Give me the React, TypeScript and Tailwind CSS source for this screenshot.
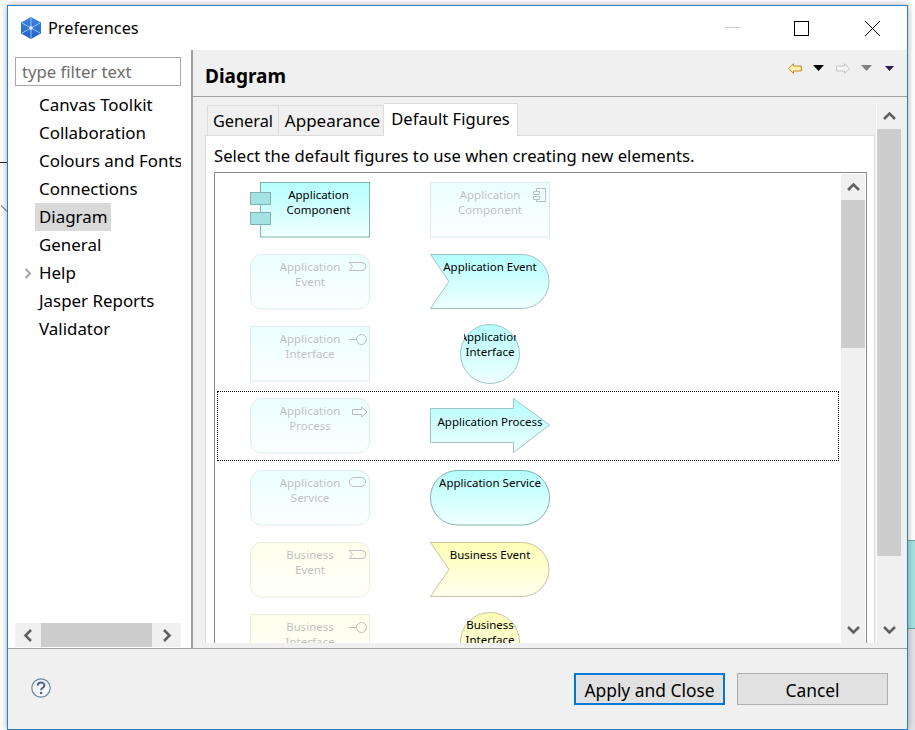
type Kind = 'component' | 'event' | 'interface' | 'process' | 'service';
type Tone = 'app' | 'biz';

const TREE = ['Canvas Toolkit', 'Collaboration', 'Colours and Fonts', 'Connections', 'Diagram', 'General', 'Help', 'Jasper Reports', 'Validator'];

const ROWS: { tone: Tone; kind: Kind; lines: string[] }[] = [
  { tone: 'app', kind: 'component', lines: ['Application', 'Component'] },
  { tone: 'app', kind: 'event', lines: ['Application', 'Event'] },
  { tone: 'app', kind: 'interface', lines: ['Application', 'Interface'] },
  { tone: 'app', kind: 'process', lines: ['Application', 'Process'] },
  { tone: 'app', kind: 'service', lines: ['Application', 'Service'] },
  { tone: 'biz', kind: 'event', lines: ['Business', 'Event'] },
  { tone: 'biz', kind: 'interface', lines: ['Business', 'Interface'] },
];

const PALETTE = {
  app: { top: '#b5ffff', bottom: '#f0ffff', stroke: '#7fb2b2', soft: '#9cc6c6', part: '#a2e2e2' },
  biz: { top: '#ffffb5', bottom: '#fffff0', stroke: '#b2b27f', soft: '#c6c69c', part: '#e2e2a2' },
};

function Chevron({ dir, className }: { dir: 'up' | 'down' | 'left' | 'right'; className?: string }) {
  const d = { up: 'M1 8 L6.5 2.5 L12 8', down: 'M1 2 L6.5 7.5 L12 2', left: 'M8 1 L2.5 6.5 L8 12', right: 'M2 1 L7.5 6.5 L2 12' }[dir];
  return (
    <svg viewBox={dir === 'up' || dir === 'down' ? '0 0 13 10' : '0 0 10 13'} className={className} fill="none" stroke="currentColor" strokeWidth="2.6">
      <path d={d} />
    </svg>
  );
}

function Body({ kind, tone, notation }: { kind: Kind; tone: Tone; notation: boolean }) {
  const c = PALETTE[tone];
  const grad = `url(#${tone}-fill)`;
  const box = { fill: grad, stroke: c.stroke };
  if (!notation) {
    // the plain box, with the type drawn small in the corner
    return kind === 'component' || kind === 'interface'
      ? <rect x="0.5" y="0.5" width="119" height="54.5" {...box} />
      : <rect x="0.5" y="0.5" width="119" height="54.5" rx="11" {...box} />;
  }
  switch (kind) {
    case 'component':
      return (
        <>
          <rect x="10.5" y="0.5" width="109" height="54.5" {...box} />
          <rect x="0.5" y="10.5" width="20" height="12" fill={c.part} stroke={c.stroke} />
          <rect x="0.5" y="30.5" width="20" height="12" fill={c.part} stroke={c.stroke} />
        </>
      );
    case 'event':
      return <path d="M0.5 0.5 H92 A27 27 0 0 1 92 54.5 H0.5 L19 27.5 Z" fill={grad} stroke={c.soft} />;
    case 'interface':
      return <circle cx="60" cy="28" r="29.5" fill={grad} stroke={c.soft} />;
    case 'process':
      return <path d="M0.5 10.5 H83.5 V0.5 L119.5 27 L83.5 54.5 V44.5 H0.5 Z" fill={grad} stroke={c.soft} />;
    case 'service':
      return <rect x="0.5" y="0.5" width="119" height="54.5" rx="27" {...box} />;
  }
}

function TypeIcon({ kind }: { kind: Kind }) {
  const s = { fill: 'none', stroke: '#000', strokeWidth: 1 };
  switch (kind) {
    case 'component':
      return (
        <>
          <path d="M106.5 9.5 V6.5 H115.5 V19.5 H106.5 V17.5" {...s} />
          <path d="M103.5 9.5 H109.5 V12.5 H103.5 Z M103.5 14.5 H109.5 V17.5 H103.5 Z" {...s} />
        </>
      );
    case 'event':
      return <path d="M99.5 8.5 H112 A4 4 0 0 1 112 16.5 H99.5 L102.5 12.5 Z" {...s} />;
    case 'interface':
      return (
        <>
          <path d="M99 13.5 H106.5" {...s} />
          <circle cx="111.5" cy="13.5" r="5" {...s} />
        </>
      );
    case 'process':
      return <path d="M102.5 11.5 H111.5 V9 L117 14 L111.5 19 V16.5 H102.5 Z" {...s} />;
    case 'service':
      return <rect x="99.5" y="7.5" width="16" height="9" rx="4.5" {...s} />;
  }
}

function Figure({ kind, tone, lines, notation, ghost }: { kind: Kind; tone: Tone; lines: string[]; notation: boolean; ghost?: boolean }) {
  const c = PALETTE[tone];
  const round = notation && kind === 'interface';
  const wide = notation && (kind === 'event' || kind === 'service' || kind === 'process');
  const label = wide ? [lines.join(' ')] : lines;
  const offset = round ? 'pt-[3px]' : kind === 'process' && notation ? 'pt-[16px]' : 'pt-[5px]';
  return (
    <div className={`relative h-[56px] w-[120px] shrink-0 ${ghost ? 'opacity-25' : ''}`}>
      <svg width="120" height="60" viewBox="0 0 120 60" className="absolute left-0 top-0 overflow-visible">
        <defs>
          <linearGradient id={`${tone}-fill`} x1="0" y1="0" x2="0" y2="1">
            <stop offset="0" stopColor={c.top} />
            <stop offset="1" stopColor={c.bottom} />
          </linearGradient>
        </defs>
        <Body kind={kind} tone={tone} notation={notation} />
        {!notation && <TypeIcon kind={kind} />}
      </svg>
      <div className={`relative flex flex-col items-center text-[11.5px] leading-[15px] text-black ${offset} ${kind === 'component' && notation ? 'pl-[17px]' : ''}`}>
        {label.map((l) => (
          <div key={l} className={`flex justify-center whitespace-nowrap ${round ? 'w-[52px] overflow-hidden' : ''}`}>
            <span className="shrink-0">{l}</span>
          </div>
        ))}
      </div>
    </div>
  );
}

function Logo() {
  return (
    <svg viewBox="0 0 20 22" className="h-[22px] w-[20px]">
      <defs>
        <linearGradient id="logo" x1="0" y1="0" x2="0" y2="1">
          <stop offset="0" stopColor="#3f86e0" />
          <stop offset="1" stopColor="#1f62c8" />
        </linearGradient>
      </defs>
      <path d="M10 0 L20 5.5 V16.5 L10 22 L0 16.5 V5.5 Z" fill="url(#logo)" />
      <path d="M10 1 V21 M1 6 L19 16 M19 6 L1 16" stroke="#a9cdf5" strokeWidth="0.9" />
      <circle cx="10" cy="11" r="1.8" fill="#e6f1fd" />
    </svg>
  );
}

function NavArrow({ back, active }: { back?: boolean; active?: boolean }) {
  return (
    <svg viewBox="0 0 14 11" className={`h-[11px] w-[14px] ${back ? '' : '-scale-x-100'}`}>
      <path
        d="M0.7 5.5 L5.5 0.7 V3 H13.4 V8 H5.5 V10.3 Z"
        fill={active ? '#fff0b0' : '#f6f6f6'}
        stroke={active ? '#c4852a' : '#c2c2c2'}
      />
    </svg>
  );
}

function Tri({ color, small }: { color: string; small?: boolean }) {
  return (
    <svg viewBox="0 0 11 6" className={small ? 'h-[5px] w-[9px]' : 'h-[6px] w-[11px]'}>
      <path d="M0 0 H11 L5.5 6 Z" fill={color} />
    </svg>
  );
}

export default function App() {
  return (
    <div className="relative h-[730px] w-[915px] overflow-hidden bg-white pl-[7px] pt-[5px] font-['Noto_Sans','Open_Sans',sans-serif] text-black">
      {/* desktop behind the dialog */}
      <div className="absolute left-0 top-[162px] h-px w-[8px] bg-[#222]" />
      <div className="absolute left-0 top-[208px] h-px w-[8px] rotate-45 bg-[#777]" />
      <div className="absolute left-[908px] top-[540px] h-[89px] w-[7px] border-y border-[#6fa5a5] bg-[#a8e4e2]" />
      <div className="absolute left-[908px] top-[629px] h-[101px] w-[7px] bg-[#e4e4e8]" />

      <div className="relative flex h-[725px] w-[901px] flex-col border border-[#2a7fc9] bg-white shadow-[0_0_7px_rgba(0,0,0,0.35)]">
        {/* title bar */}
        <div className="flex h-[44px] shrink-0 items-center pl-[13px] pr-[27px]">
          <Logo />
          <span className="ml-[7px] text-[16.3px]">Preferences</span>
          <div className="ml-auto flex items-center">
            <div className="-mt-px h-px w-[15px] bg-[#c8c8c8]" />
            <div className="ml-[54px] h-[15px] w-[15px] border border-black" />
            <svg viewBox="0 0 15 15" className="ml-[56px] h-[15px] w-[15px]" stroke="#000" strokeWidth="1">
              <path d="M0 0 L15 15 M15 0 L0 15" />
            </svg>
          </div>
        </div>

        <div className="flex min-h-0 flex-1">
          {/* left: filter and tree */}
          <div className="flex w-[185px] shrink-0 flex-col border-r-2 border-[#a0a0a0] pl-[7px] pr-[10px] pt-[7px]">
            <input
              readOnly
              placeholder="type filter text"
              className="h-[29px] w-[166px] shrink-0 border border-[#a8a8a8] px-[6px] text-[16.7px] outline-none placeholder:text-[#6d6d6d]"
            />
            <div className="mt-[5px] w-[166px] flex-1 overflow-hidden">
              {TREE.map((t) => (
                <div key={t} className="relative flex h-[28px] items-center whitespace-nowrap pl-[20px] text-[16.9px]">
                  {t === 'Help' && (
                    <Chevron dir="right" className="absolute left-[9px] top-[9px] h-[11px] w-[8px] text-[#a6a6a6]" />
                  )}
                  <span className={`flex h-[28px] items-center px-[4px] ${t === 'Diagram' ? 'bg-[#d9d9d9]' : ''}`}>{t}</span>
                </div>
              ))}
            </div>
            <div className="flex h-[24px] w-[166px] shrink-0 items-center bg-[#f0f0f0]">
              <div className="flex w-[26px] justify-center">
                <Chevron dir="left" className="h-[13px] w-[10px] text-[#606060]" />
              </div>
              <div className="h-full w-[111px] bg-[#cdcdcd]" />
              <div className="flex w-[29px] justify-center">
                <Chevron dir="right" className="h-[13px] w-[10px] text-[#606060]" />
              </div>
            </div>
            <div className="h-px shrink-0" />
          </div>

          {/* right: page */}
          <div className="flex min-w-0 flex-1 flex-col bg-[#f0f0f0]">
            <div className="flex h-[47px] shrink-0 items-center border-b border-[#a0a0a0] pl-[12px] pr-[13px]">
              <span className="pt-[6px] text-[19px] font-bold">Diagram</span>
              <div className="-mt-[10px] ml-auto flex items-center">
                <NavArrow back active />
                <div className="ml-[11px]"><Tri color="#000" /></div>
                <div className="ml-[12px]"><NavArrow /></div>
                <div className="ml-[11px]"><Tri color="#808080" /></div>
                <div className="ml-[13px]"><Tri color="#2e1c52" small /></div>
              </div>
            </div>

            <div className="flex min-h-0 flex-1 pb-[5px] pl-[12px] pr-[6px] pt-[6px]">
              {/* tab folder */}
              <div className="flex w-[670px] shrink-0 flex-col">
                <div className="relative z-10 flex h-[33px] shrink-0 items-end pl-[2px]">
                  <div className="flex h-[31px] w-[71px] items-center justify-center border border-b-0 border-r-0 border-[#dcdcdc] text-[16.3px]">General</div>
                  <div className="flex h-[31px] w-[106px] items-center justify-center border border-b-0 border-[#dcdcdc] pl-[3px] text-[17px]">Appearance</div>
                  <div className="flex h-[33px] w-[134px] items-center justify-center border border-b-0 border-l-0 border-[#dcdcdc] bg-white pb-[2px] text-[16.6px]">Default Figures</div>
                </div>
                <div className="-mt-px flex min-h-0 flex-1 flex-col border-x border-t border-x-[#dcdcdc] border-t-[#dcdcdc] bg-white pl-[8px]">
                  <div className="flex h-[36px] shrink-0 items-center pt-[4px] text-[16.65px]">Select the default figures to use when creating new elements.</div>
                  <div className="flex min-h-0 w-[653px] flex-1 border-x border-t border-[#8a8a8a]">
                    <div className="min-w-0 flex-1 overflow-hidden">
                      {ROWS.map((r, i) => (
                        <div key={i} className="h-[72px] px-[2px] pt-[2px]">
                          <div className={`flex h-[70px] gap-[60px] border pl-[32px] pt-[6px] ${i === 3 ? 'border-dotted border-black' : 'border-transparent'}`}>
                            <Figure kind={r.kind} tone={r.tone} lines={r.lines} notation={i === 0} ghost={i !== 0} />
                            <Figure kind={r.kind} tone={r.tone} lines={r.lines} notation={i !== 0} ghost={i === 0} />
                          </div>
                        </div>
                      ))}
                    </div>
                    <div className="mt-px flex w-[24px] shrink-0 flex-col items-center bg-[#f0f0f0]">
                      <div className="flex h-[26px] items-center"><Chevron dir="up" className="h-[10px] w-[13px] text-[#606060]" /></div>
                      <div className="h-[148px] w-full bg-[#cdcdcd]" />
                      <div className="mt-auto flex h-[26px] items-center"><Chevron dir="down" className="h-[10px] w-[13px] text-[#606060]" /></div>
                    </div>
                    <div className="w-px shrink-0" />
                  </div>
                </div>
              </div>

              {/* page scrollbar */}
              <div className="ml-[1px] w-px shrink-0 bg-white" />
              <div className="flex w-[24px] shrink-0 flex-col items-center">
                <div className="flex h-[26px] items-center"><Chevron dir="up" className="h-[10px] w-[13px] text-[#606060]" /></div>
                <div className="h-[427px] w-full bg-[#cdcdcd]" />
                <div className="mt-auto flex h-[26px] items-center"><Chevron dir="down" className="h-[10px] w-[13px] text-[#606060]" /></div>
              </div>
            </div>
          </div>
        </div>

        {/* buttons */}
        <div className="flex h-[81px] shrink-0 items-start border-t border-[#a0a0a0] bg-[#f0f0f0] pl-[23px] pr-[19px] pt-[24px]">
          <svg viewBox="0 0 20 20" className="mt-[5px] h-[20px] w-[20px]">
            <circle cx="10" cy="10" r="9.2" fill="#f4f6fa" stroke="#6f86a8" strokeWidth="1.2" />
            <path d="M6.8 7.6 C6.8 3.6 13.4 3.6 13.4 7.4 C13.4 9.8 10.1 9.8 10.1 12.2" fill="none" stroke="#4a6390" strokeWidth="2" />
            <circle cx="10.1" cy="15" r="1.3" fill="#4a6390" />
          </svg>
          <button className="ml-auto h-[32px] w-[151px] border-2 border-[#0078d7] bg-[#e1e1e1] pt-[2px] text-[17.4px]">Apply and Close</button>
          <button className="ml-[12px] h-[32px] w-[151px] border border-[#adadad] bg-[#e1e1e1] pt-[2px] text-[17.4px]">Cancel</button>
        </div>
      </div>
    </div>
  );
}
